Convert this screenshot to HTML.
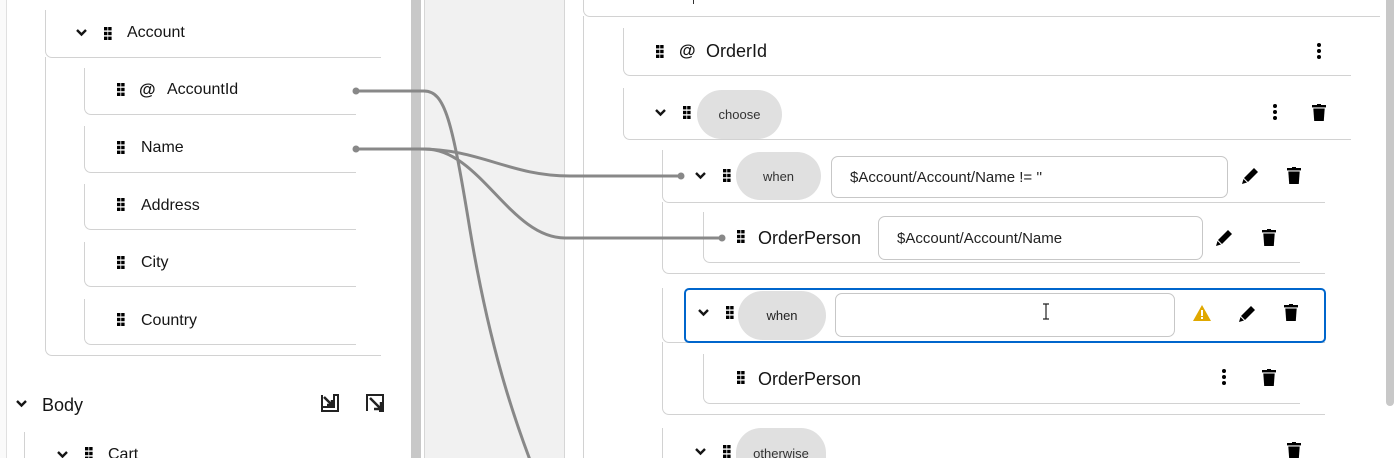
<!DOCTYPE html>
<html><head><meta charset="utf-8"><style>
*{box-sizing:border-box;margin:0;padding:0}
html{width:1397px;height:458px;overflow:hidden}
body{width:1397px;height:458px;overflow:hidden;background:#fff;font-family:"Liberation Sans",sans-serif;color:#151515;position:relative}
.a{position:absolute}
.card{position:absolute;border-left:1px solid #d2d2d2;border-bottom:1px solid #d2d2d2;border-bottom-left-radius:7px}
.t{position:absolute;white-space:nowrap;line-height:1}
.pill{position:absolute;background:#e0e0e0;border-radius:25px;font-size:13px;color:#333;display:flex;align-items:center;justify-content:center}
.inp{position:absolute;border:1px solid #c7c7c7;border-radius:7px;background:#fff;font-size:15px;display:flex;align-items:center;padding-left:18px;color:#222}
svg.i{position:absolute;overflow:visible}
</style></head><body>
<svg width="0" height="0" style="position:absolute">
<defs>
<g id="drag"><rect x="0" y="0" width="3.4" height="3.4"/><rect x="4.2" y="0" width="3.4" height="3.4"/><rect x="0" y="4.8" width="3.4" height="3.4"/><rect x="4.2" y="4.8" width="3.4" height="3.4"/><rect x="0" y="9.6" width="3.4" height="3.4"/><rect x="4.2" y="9.6" width="3.4" height="3.4"/></g>
<path id="chev" d="M0 0 L4.5 4.5 L9 0" fill="none" stroke="#151515" stroke-width="2.4"/>
<g id="trash"><rect x="0" y="1" width="14" height="2.4"/><rect x="5" y="0" width="4" height="2"/><path d="M1.3 4.5 H12.7 L11.8 17 H2.2Z"/></g>
<g id="kebab"><circle cx="2" cy="2" r="2"/><circle cx="2" cy="8" r="2"/><circle cx="2" cy="14" r="2"/></g>
<g id="pencil"><path d="M12 1 L16 5 L6 15 L2 11Z"/><path d="M1.5 12 L5 15.5 L0 17Z"/></g>
</defs></svg>

<div class="a" style="left:0;top:0;width:7px;height:458px;border-right:1px solid #e0e0e0;background:#fafafa"></div>
<div class="a" style="left:411px;top:0;width:10px;height:458px;background:#c8c8c8"></div>
<div class="a" style="left:424px;top:0;width:141px;height:458px;background:#f1f1f1;border-left:1px solid #d6d6d6;border-right:1px solid #d6d6d6"></div>

<div class="card" style="left:45px;top:10px;width:336px;height:48px"></div>
<svg class="i" style="left:77px;top:30px" width="9" height="6"><use href="#chev"/></svg>
<svg class="i" style="left:104px;top:27px" width="8" height="13"><use href="#drag"/></svg>
<div class="t" style="left:127px;top:25px;font-size:16px">Account</div>
<div class="card" style="left:45px;top:57px;width:336px;height:299px"></div>

<div class="card" style="left:84px;top:68px;width:272px;height:47px"></div>
<svg class="i" style="left:117px;top:83px" width="8" height="13"><use href="#drag"/></svg>
<div class="t" style="left:139px;top:81px;font-size:17px;font-weight:bold">@</div>
<div class="t" style="left:167px;top:82px;font-size:16px">AccountId</div>

<div class="card" style="left:84px;top:126px;width:272px;height:47px"></div>
<svg class="i" style="left:117px;top:141px" width="8" height="13"><use href="#drag"/></svg>
<div class="t" style="left:141px;top:140px;font-size:16px">Name</div>

<div class="card" style="left:84px;top:184px;width:272px;height:46px"></div>
<svg class="i" style="left:117px;top:198px" width="8" height="13"><use href="#drag"/></svg>
<div class="t" style="left:141px;top:198px;font-size:16px">Address</div>

<div class="card" style="left:84px;top:242px;width:272px;height:45px"></div>
<svg class="i" style="left:117px;top:256px" width="8" height="13"><use href="#drag"/></svg>
<div class="t" style="left:141px;top:255px;font-size:16px">City</div>

<div class="card" style="left:84px;top:299px;width:272px;height:46px"></div>
<svg class="i" style="left:117px;top:313px" width="8" height="13"><use href="#drag"/></svg>
<div class="t" style="left:141px;top:313px;font-size:16px">Country</div>

<svg class="i" style="left:17px;top:401px" width="9" height="6"><use href="#chev"/></svg>
<div class="t" style="left:42px;top:396px;font-size:18px">Body</div>
<svg class="i" style="left:321px;top:394px" width="18" height="18"><path d="M1 1 V17 H17 V1 H13 V13 H1" fill="none" stroke="#222" stroke-width="2"/><path d="M3 3 L11 11 M6 11 H11 V6" fill="none" stroke="#222" stroke-width="2.5"/></svg>
<svg class="i" style="left:366px;top:394px" width="18" height="18"><path d="M1 17 V1 H17 V17 H13" fill="none" stroke="#222" stroke-width="2"/><path d="M4 4 L14 14 M8 15 H15 V8" fill="none" stroke="#222" stroke-width="2.5"/></svg>
<div class="a" style="left:24px;top:432px;width:1px;height:30px;background:#d2d2d2"></div>
<svg class="i" style="left:58px;top:452px" width="9" height="6"><use href="#chev"/></svg>
<svg class="i" style="left:85px;top:447px" width="8" height="13"><use href="#drag"/></svg>
<div class="t" style="left:108px;top:447px;font-size:16px">Cart</div>

<div class="card" style="left:583px;top:-20px;width:797px;height:37px"></div>
<div class="a" style="left:583px;top:16px;width:1px;height:450px;background:#d2d2d2"></div>
<div class="a" style="left:693px;top:0;width:1px;height:4px;background:#333"></div>
<div class="a" style="left:1386px;top:0;width:8px;height:406px;background:#c8c8c8;border-radius:0 0 4px 4px"></div>

<div class="card" style="left:623px;top:28px;width:728px;height:48px"></div>
<svg class="i" style="left:656px;top:45px" width="8" height="13"><use href="#drag"/></svg>
<div class="t" style="left:679px;top:42px;font-size:17px;font-weight:bold">@</div>
<div class="t" style="left:706px;top:42px;font-size:18px">OrderId</div>
<svg class="i" style="left:1317px;top:43px" width="4" height="16"><use href="#kebab"/></svg>

<div class="card" style="left:623px;top:88px;width:728px;height:52px"></div>
<svg class="i" style="left:656px;top:110px" width="9" height="6"><use href="#chev"/></svg>
<svg class="i" style="left:683px;top:106px" width="8" height="13"><use href="#drag"/></svg>
<div class="pill" style="left:697px;top:90px;width:85px;height:49px">choose</div>
<svg class="i" style="left:1273px;top:104px" width="4" height="16"><use href="#kebab"/></svg>
<svg class="i" style="left:1312px;top:104px" width="14" height="17"><use href="#trash"/></svg>

<div class="card" style="left:662px;top:150px;width:663px;height:53px"></div>
<svg class="i" style="left:696px;top:173px" width="9" height="6"><use href="#chev"/></svg>
<svg class="i" style="left:723px;top:169px" width="8" height="13"><use href="#drag"/></svg>
<div class="pill" style="left:736px;top:152px;width:85px;height:48px">when</div>
<div class="inp" style="left:831px;top:156px;width:397px;height:42px">$Account/Account/Name != ''</div>
<svg class="i" style="left:1242px;top:167px" width="17" height="17"><use href="#pencil"/></svg>
<svg class="i" style="left:1287px;top:167px" width="14" height="17"><use href="#trash"/></svg>

<div class="card" style="left:662px;top:202px;width:663px;height:72px"></div>
<div class="card" style="left:703px;top:212px;width:597px;height:51px"></div>
<svg class="i" style="left:737px;top:230px" width="8" height="13"><use href="#drag"/></svg>
<div class="t" style="left:758px;top:229px;font-size:18px">OrderPerson</div>
<div class="inp" style="left:878px;top:216px;width:325px;height:44px">$Account/Account/Name</div>
<svg class="i" style="left:1216px;top:229px" width="17" height="17"><use href="#pencil"/></svg>
<svg class="i" style="left:1262px;top:229px" width="14" height="17"><use href="#trash"/></svg>

<div class="card" style="left:662px;top:288px;width:663px;height:55px"></div>
<div class="a" style="left:684px;top:288px;width:642px;height:55px;border:2px solid #0066cc;border-radius:5px;background:#fff"></div>
<svg class="i" style="left:699px;top:310px" width="9" height="6"><use href="#chev"/></svg>
<svg class="i" style="left:726px;top:306px" width="8" height="13"><use href="#drag"/></svg>
<div class="pill" style="left:738px;top:291px;width:88px;height:49px;font-size:13px;color:#222">when</div>
<div class="inp" style="left:835px;top:293px;width:340px;height:44px"></div>
<svg class="i" style="left:1042px;top:303px" width="8" height="17"><path d="M1 1 H7 M4 1 V16 M1 16 H7" stroke="#222" stroke-width="1.2" fill="none"/></svg>
<svg class="i" style="left:1193px;top:305px" width="18" height="16"><path d="M9 0 L18 16 H0Z" fill="#e0a800"/><rect x="8" y="5" width="2" height="6" fill="#fff"/><rect x="8" y="12" width="2" height="2" fill="#fff"/></svg>
<svg class="i" style="left:1239px;top:305px" width="17" height="17"><use href="#pencil"/></svg>
<svg class="i" style="left:1284px;top:304px" width="14" height="17"><use href="#trash"/></svg>

<div class="card" style="left:662px;top:342px;width:663px;height:73px"></div>
<div class="card" style="left:703px;top:354px;width:597px;height:50px"></div>
<svg class="i" style="left:737px;top:371px" width="8" height="13"><use href="#drag"/></svg>
<div class="t" style="left:758px;top:370px;font-size:18px">OrderPerson</div>
<svg class="i" style="left:1222px;top:369px" width="4" height="16"><use href="#kebab"/></svg>
<svg class="i" style="left:1262px;top:369px" width="14" height="17"><use href="#trash"/></svg>

<div class="a" style="left:662px;top:428px;width:1px;height:30px;background:#d2d2d2"></div>
<svg class="i" style="left:696px;top:449px" width="9" height="6"><use href="#chev"/></svg>
<svg class="i" style="left:723px;top:445px" width="8" height="13"><use href="#drag"/></svg>
<div class="pill" style="left:736px;top:428px;width:90px;height:30px;border-radius:25px 25px 0 0;align-items:flex-start;padding-top:18px">otherwise</div>
<svg class="i" style="left:1287px;top:442px" width="14" height="16"><use href="#trash"/></svg>

<svg class="a" style="left:0;top:0" width="1397" height="458">
<g fill="none" stroke="#888" stroke-width="3">
<path d="M356 91 H424 C445 91 452 120 470 230 C490 350 515 420 530 460"/>
<path d="M356 149 H420 C480 149 510 176 570 176 H681"/>
<path d="M356 149 H425 C480 149 510 238 565 238 H722"/>
</g>
<g fill="#888"><circle cx="356" cy="91" r="3.5"/><circle cx="356" cy="149" r="3.5"/><circle cx="681" cy="176" r="3.5"/><circle cx="722" cy="238" r="3.5"/></g>
</svg>
</body></html>
